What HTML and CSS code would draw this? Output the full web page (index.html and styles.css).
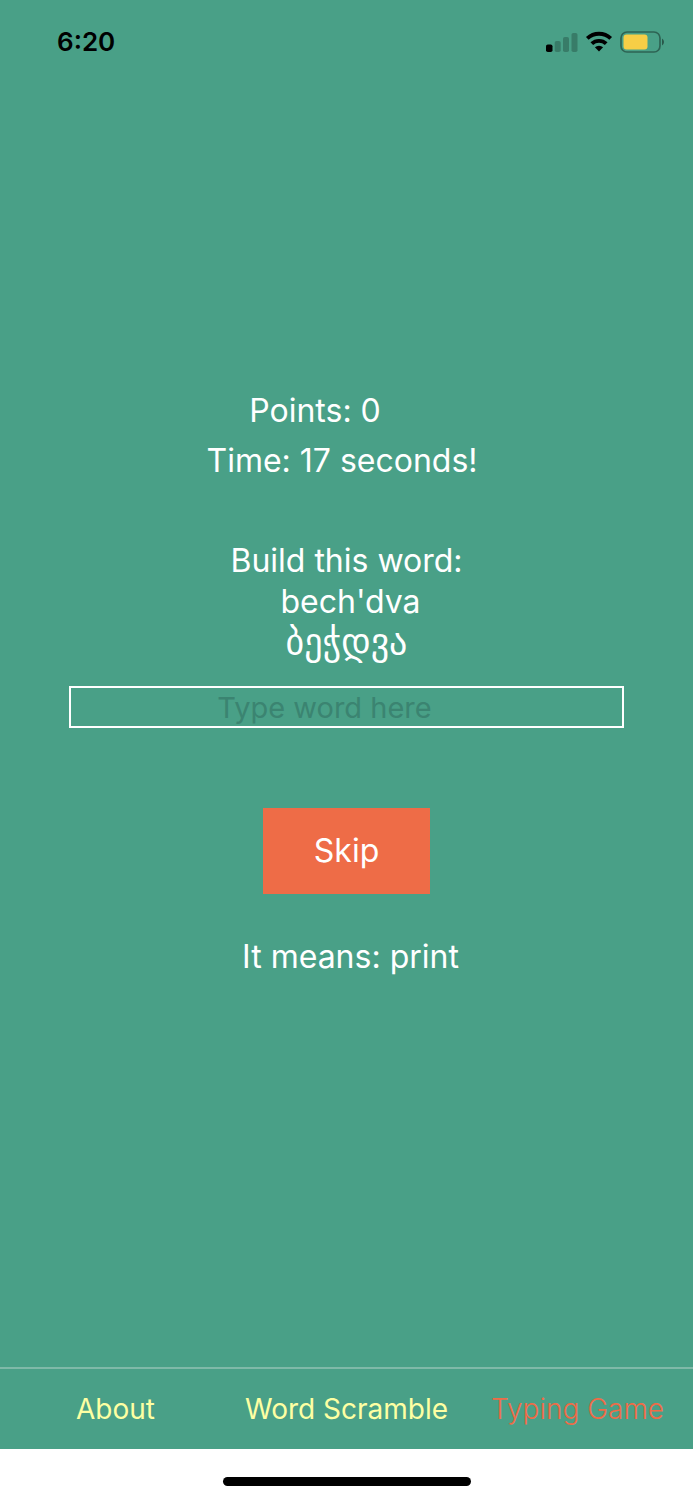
FILE: index.html
```html
<!DOCTYPE html>
<html lang="en">
<head>
<meta charset="utf-8">
<meta name="viewport" content="width=device-width, initial-scale=1">
<title>Typing Game</title>
<link rel="stylesheet" href="styles.css">
</head>
<body>
<div class="screen">
  <header class="status">
    <time class="clock">6:20</time>
    <div class="indicators">
      <svg class="signal" width="32" height="20" viewBox="0 0 32 20" aria-label="Signal">
        <rect x="0" y="12.500" width="6.500" height="7.500" rx="1.800"/>
        <g opacity=".22"><rect x="8.700" y="9" width="6" height="11" rx="1.800"/><rect x="17" y="5" width="6" height="15" rx="1.800"/><rect x="25.500" y="1" width="6" height="19" rx="1.800"/></g>
      </svg>
      <svg width="28" height="21" viewBox="0 0 28 21" aria-label="Wi-Fi">
        <path d="M2.300 7.400A17 17 0 0 1 25.700 7.400M6.800 12.700A10.500 10.500 0 0 1 21.200 12.700" fill="none" stroke="#000" stroke-width="3.900"/>
        <path d="M14 20.500l-4.100-4.200A6 6 0 0 1 18.100 16.300Z"/>
      </svg>
      <svg width="45" height="22" viewBox="0 0 45 22" aria-label="Battery">
        <rect x="1" y="1" width="39" height="20" rx="6" fill="none" stroke="#000" stroke-opacity=".38" stroke-width="1.700"/>
        <rect x="3.500" y="3.500" width="24" height="15" rx="3" fill="#f7ce46"/>
        <path d="M42 7.500q2 1 2 3.500t-2 3.500z" opacity=".45"/>
      </svg>
    </div>
  </header>
  <main class="game">
    <p class="line points">Points: 0</p>
    <p class="line timer">Time: 17 seconds!</p>
    <label class="line prompt" for="word">Build this word:</label>
    <p class="line latin">bech'dva</p>
    <p class="line georgian" lang="ka">ბეჭდვა</p>
    <input class="word" id="word" type="text" placeholder="Type word here">
    <button class="skip" type="button">Skip</button>
    <p class="line meaning">It means: print</p>
  </main>
  <nav class="tabs">
    <a class="tab" href="#about">About</a>
    <a class="tab" href="#scramble">Word Scramble</a>
    <a class="tab active" href="#typing" aria-current="page">Typing Game</a>
  </nav>
  <footer class="home"><span class="handle"></span></footer>
</div>
</body>
</html>
```
FILE: styles.css
```css
* { box-sizing: border-box; }
body { margin: 0; font-family: Inter, "Noto Sans", "DejaVu Sans", sans-serif; }
.screen { min-height: 100vh; display: flex; flex-direction: column; background: #49a087; }
.status { display: flex; justify-content: space-between; align-items: center; height: 83px; padding: 0 28px 0 57px; }
.clock { font-size: 26px; font-weight: 600; }
.indicators { display: flex; align-items: center; gap: 7px; }
.game { flex: 1; display: flex; flex-direction: column; align-items: center; justify-content: center; padding-bottom: 82px; color: #fff; }
.line { margin: 0; font-size: 32px; line-height: 42px; white-space: pre; }
.points { margin-bottom: 8px; padding-right: 63px; }
.timer { margin-bottom: 58px; padding-right: 9px; }
.latin, .meaning { padding-left: 8px; }
.latin { line-height: 40px; }
.georgian { font-family: "DejaVu Sans", sans-serif; font-size: 36px; line-height: 40px; }
.word { width: 80%; height: 42px; margin: 24px 0 80px; padding: 0 44px 0 0; border: 2px solid #fff; border-radius: 0; background: transparent; color: #fff; font: inherit; font-size: 29px; text-align: center; }
.word::placeholder { color: #3b8471; opacity: 1; }
.skip { margin-bottom: 42px; padding: 22px 51px; border: 0; background: #ee6c47; color: #fff; font: inherit; font-size: 32px; line-height: 42px; }
.tabs { display: flex; height: 82px; border-top: 2px solid #7fb9a8; }
.tab { flex: 1; display: flex; align-items: center; justify-content: center; color: #fdffa3; font-size: 28px; text-decoration: none; white-space: nowrap; }
.tab.active { color: #ee6c47; font-weight: 300; }
.home { display: flex; justify-content: center; align-items: center; height: 51px; padding-top: 14px; background: #fff; }
.handle { width: 248px; height: 9px; border-radius: 5px; background: #000; }
```
